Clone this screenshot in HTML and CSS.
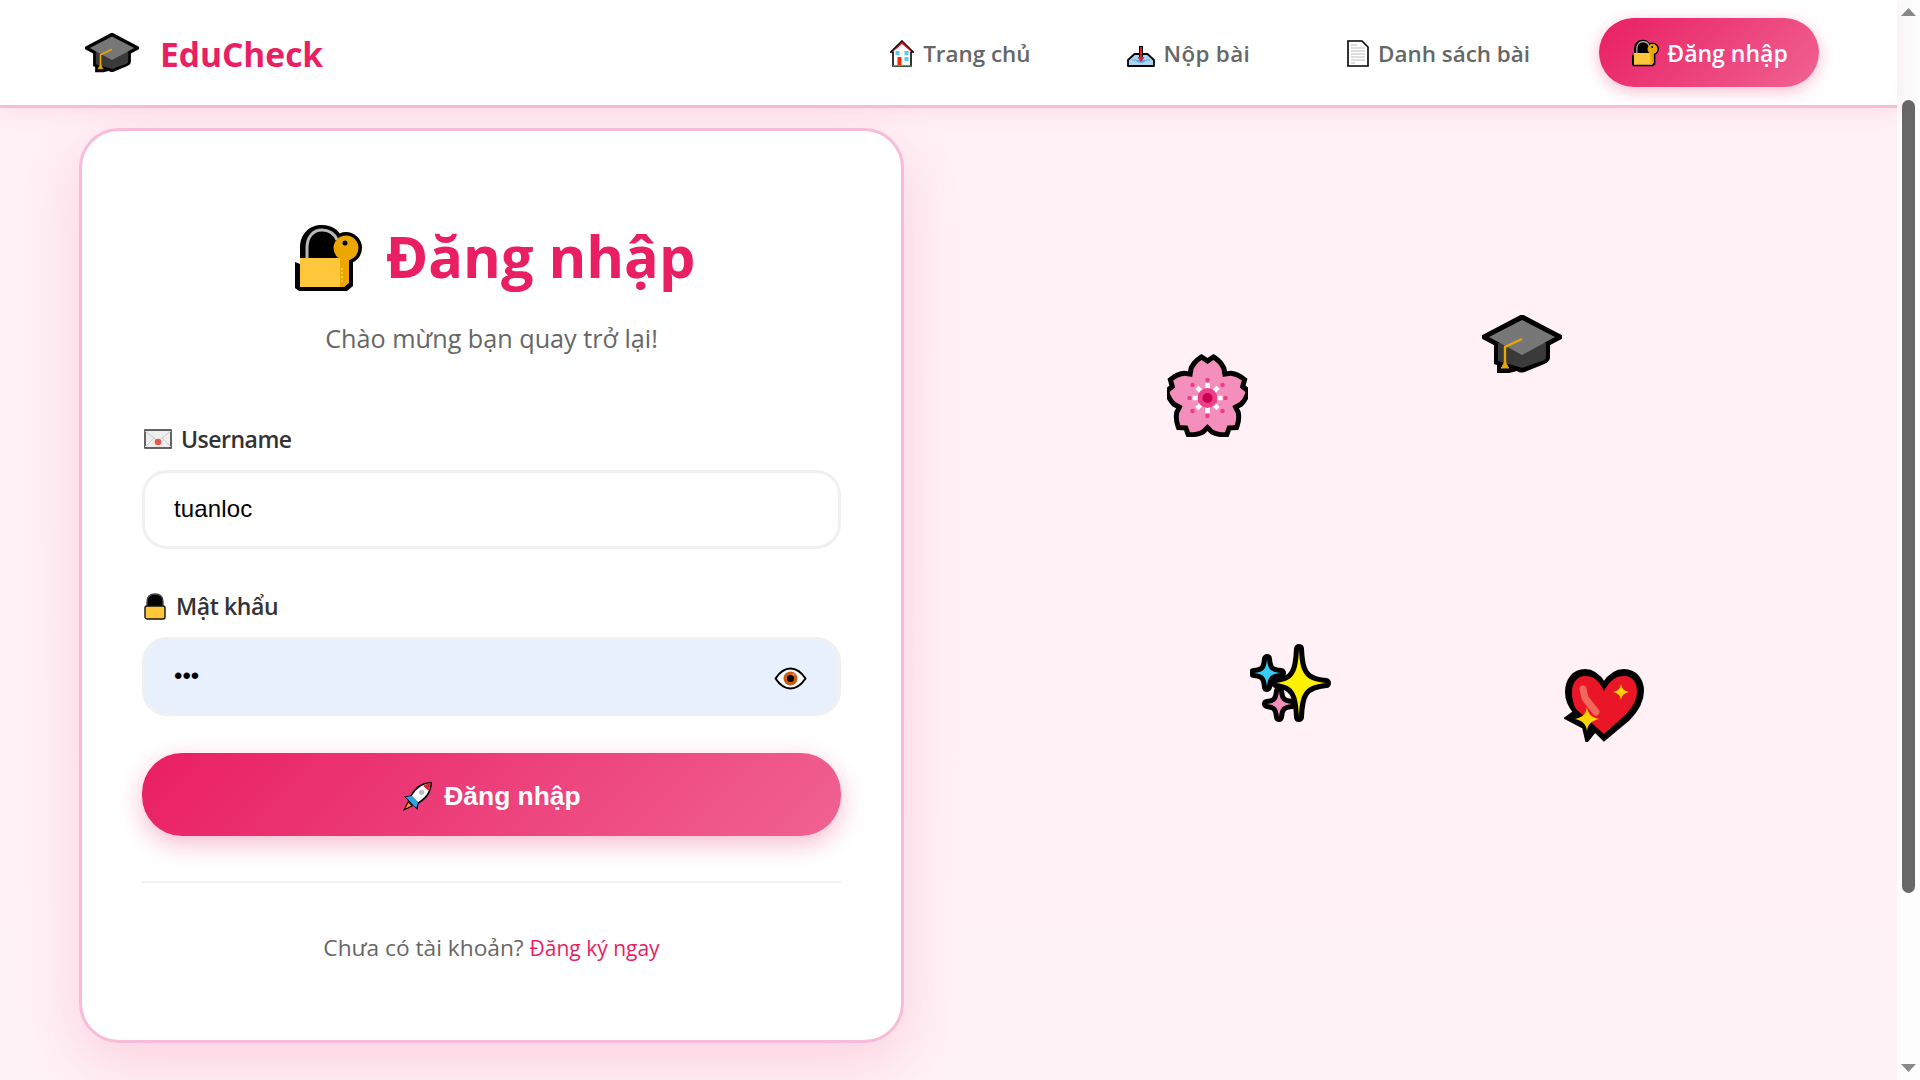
FILE: index.html
```html
<!DOCTYPE html>
<html lang="vi">
<head>
<meta charset="utf-8">
<title>EduCheck</title>
<link rel="stylesheet" href="styles.css">
</head>
<body>
<svg class="defs" aria-hidden="true">
  <symbol id="cap" viewBox="0 0 80 62">
    <path d="M12 27V49L15 50V58H27L35 56C38 58 42 58 45 56L60 50C65 48 68 46 68 42V27Z" fill="#000"/>
    <path d="M40 2 78 22 40 42 2 22Z" fill="#000" stroke="#000" stroke-width="5" stroke-linejoin="round"/>
    <path d="M16 28V46L37 52C39 53 41 53 43 52L60 46C63 45 64 44 64 41V28Z" fill="#3a3a3a"/>
    <path d="M40 5 73 22 40 40 7 22Z" fill="#777"/>
    <path d="M40 24 23 32V48" fill="none" stroke="#eba600" stroke-width="2.4"/>
    <path d="M23 46 26 52 27 53H19L20 52Z" fill="#eba600" stroke="#eba600"/>
  </symbol>
  <symbol id="lockkey" viewBox="0 0 67 68">
    <path d="M5 40V24C5 9 15 1 27 1 37 1 44 6 47 14V38H58V62L52 67H4L0 64V38Z" fill="#000"/>
    <circle cx="51" cy="24" r="16" fill="#000"/>
    <path d="M12 34V24C12 13 18 6 27 6 34 6 40 10 42 16" fill="none" stroke="#b9b9b9" stroke-width="3"/>
    <path d="M5 34H53V59L49 63H5Z" fill="#fec63b"/>
    <path d="M45 34H54V59L49 63H45Z" fill="#eba600"/>
    <path d="M47 44V60" stroke="#fec63b" stroke-width="2" stroke-dasharray="2 2"/>
    <circle cx="51" cy="24" r="12.500" fill="#eba600"/>
    <circle cx="50" cy="19" r="2.500" fill="#000"/>
  </symbol>
</svg>

<div class="viewport">
  <div class="page">
    <header class="topbar">
      <a class="brand">
        <svg class="brand-icon"><use href="#cap"/></svg>
        <span class="brand-name">EduCheck</span>
      </a>
      <nav class="nav">
        <a class="nav-link">
          <svg class="nav-icon" viewBox="0 0 24 27">
            <path d="M12 1 23 12H21V26H3V12H1Z" fill="#fff" stroke="#000" stroke-width="1.600"/>
            <path d="M12 2 21.500 11.500 12 3.500 2.500 11.500Z" fill="#e11" stroke="#d01" />
            <rect x="5.500" y="11" width="4" height="4" fill="#4ccdf7"/>
            <rect x="14.500" y="11" width="4" height="4" fill="#4ccdf7"/>
            <rect x="14.500" y="17" width="4" height="4" fill="#4ccdf7"/>
            <rect x="7.500" y="17" width="4" height="8" fill="#f52a0c"/>
            <path d="M3 25.600H21" stroke="#1ecb2a" stroke-width="1.200"/>
          </svg>
          Trang chủ
        </a>
        <a class="nav-link">
          <svg class="nav-icon nav-icon-wide" viewBox="0 0 28 27">
            <path d="M7.500 14H20.500L27 20V26H1V20Z" fill="#a9d4f2" stroke="#000" stroke-width="1.800" stroke-linejoin="round"/>
            <path d="M5 20H9C10 23 18 23 19 20H23" fill="#5aa7dc" stroke="#5aa7dc" stroke-width="1"/>
            <path d="M14 6V17" stroke="#000" stroke-width="4"/>
            <path d="M14 7V19" stroke="#e11d2a" stroke-width="2"/>
            <path d="M10.500 17H17.500L14 22Z" fill="#e11d2a"/>
          </svg>
          Nộp bài
        </a>
        <a class="nav-link">
          <svg class="nav-icon nav-icon-doc" viewBox="0 0 22 27">
            <path d="M1 1H15L21 7V26H1Z" fill="#fff" stroke="#000" stroke-width="1.600"/>
            <path d="M4 5H10M4 8H18M4 11H18M4 14H18M4 17H18M4 20H18M4 23H8" stroke="#bdbdbd" stroke-width="1"/>
          </svg>
          Danh sách bài
        </a>
        <a class="nav-cta">
          <svg class="cta-icon"><use href="#lockkey"/></svg>
          Đăng nhập
        </a>
      </nav>
    </header>

    <main class="content">
      <section class="card">
        <h1 class="title">
          <svg class="title-icon"><use href="#lockkey"/></svg>
          <span class="title-text">Đăng nhập</span>
        </h1>
        <p class="subtitle">Chào mừng bạn quay trở lại!</p>

        <form class="form">
          <label class="label label-user">
            <svg class="label-mail" viewBox="0 0 28 20">
              <rect x="1" y="1" width="26" height="18" fill="#eee" stroke="#333" stroke-width="1.500"/>
              <path d="M1 2 14 12 27 2M1 18 10 9M27 18 18 9" fill="none" stroke="#ccc" stroke-width="1"/>
              <circle cx="14" cy="13" r="3.300" fill="#ea5a4c"/>
            </svg>
            Username
          </label>
          <input class="field field-text" type="text" value="tuanloc">

          <label class="label label-pass">
            <svg class="label-lock" viewBox="0 0 22 27">
              <path d="M3 15V9C3 4 6 1 11 1S19 4 19 9V15Z" fill="#000" stroke="#444" stroke-width="1.400"/>
              <path d="M1 15C1 14 2 13 3 13H19C20 13 21 14 21 15V24C21 25 20 26 19 26H3C2 26 1 25 1 24Z" fill="#fec63b" stroke="#111" stroke-width="1.400"/>
            </svg>
            Mật khẩu
          </label>
          <div class="field-wrap">
            <input class="field field-filled" type="password" value="abc">
            <svg class="eye" viewBox="0 0 32 23">
              <path d="M1 11.500C6 4 11 1.500 16 1.500S26 4 31 11.500C26 19 21 21.500 16 21.500S6 19 1 11.500Z" fill="#fff" stroke="#000" stroke-width="2" stroke-linejoin="round"/>
              <circle cx="16" cy="11.500" r="7" fill="#cf5b12"/>
              <circle cx="16" cy="11.500" r="3.500" fill="#000"/>
              <circle cx="19" cy="7.500" r="1" fill="#f3b58d"/>
            </svg>
          </div>

          <button class="submit" type="button">
            <svg class="rocket" viewBox="0 0 30 30">
              <path d="M29 1C20 1 13 5 8 14L2 15 5 18 12 25 15 28 16 22C25 17 29 10 29 1Z" fill="#000"/>
              <path d="M27.500 2.500C20 3 14 7 9.500 14.500L15.500 20.500C23 16 27 10 27.500 2.500Z" fill="#fff"/>
              <path d="M27.500 2.500C25 2.600 22.500 3.400 20.500 4.500L25.500 9.500C26.700 7.500 27.400 5 27.500 2.500Z" fill="#e11d2a"/>
              <path d="M9.500 14.500 3.500 15.500 6 18 11.500 24 14 26 15.500 20.500Z" fill="#2aa6e6"/>
              <circle cx="19" cy="11" r="2.600" fill="#bdbdbd"/>
              <path d="M6 20 2 28 10 24Z" fill="#f79a1e" stroke="#000" stroke-width="1"/>
            </svg>
            Đăng nhập
          </button>
        </form>

        <hr class="rule">
        <p class="foot">Chưa có tài khoản? <a class="foot-link">Đăng ký ngay</a></p>
      </section>

      <aside class="deco">
        <svg class="emoji emoji-flower" viewBox="0 0 81 84">
          <defs>
            <path id="petal" d="M0 0-16-17-14-29C-12-33-9-36-6-38L0-34 6-38C9-36 12-33 14-29L16-17Z"/>
          </defs>
          <g transform="translate(40.500 45)">
            <g fill="#000" stroke="#000" stroke-width="10" stroke-linejoin="miter">
              <use href="#petal"/>
              <use href="#petal" transform="rotate(72)"/>
              <use href="#petal" transform="rotate(144)"/>
              <use href="#petal" transform="rotate(216)"/>
              <use href="#petal" transform="rotate(288)"/>
            </g>
            <g fill="#f48fbb">
              <use href="#petal"/>
              <use href="#petal" transform="rotate(72)"/>
              <use href="#petal" transform="rotate(144)"/>
              <use href="#petal" transform="rotate(216)"/>
              <use href="#petal" transform="rotate(288)"/>
            </g>
            <path d="M0-15V15M-15 0H15M-10.600-10.600 10.600 10.600M-10.600 10.600 10.600-10.600" stroke="#fff" stroke-width="4.500"/>
            <g fill="#ee3d8b">
              <circle cy="-18" r="2.300"/><circle cy="18" r="2.300"/><circle cx="-18" r="2.300"/><circle cx="18" r="2.300"/>
              <circle cx="-15" cy="-13" r="2.300"/><circle cx="15" cy="-13" r="2.300"/><circle cx="-15" cy="13" r="2.300"/><circle cx="15" cy="13" r="2.300"/>
              <circle r="10"/>
            </g>
            <circle r="5" fill="#c9004f"/>
          </g>
        </svg>

        <svg class="emoji emoji-cap"><use href="#cap"/></svg>

        <svg class="emoji emoji-sparkles" viewBox="0 0 81 78">
          <defs>
            <path id="bigstar" d="M49 5C50 27 53 37 76 39 53 41 50 51 49 73 48 51 45 41 26 39 45 37 48 27 49 5Z"/>
            <path id="bluestar" d="M17 15C18 25 20 28 31 29 20 30 18 33 17 43 16 33 14 30 4 29 14 28 16 25 17 15Z"/>
            <path id="pinkstar" d="M29 47C30 56 32 59 42 60 32 61 30 64 29 73 28 64 26 61 17 60 26 59 28 56 29 47Z"/>
          </defs>
          <g stroke="#000" stroke-width="10" stroke-linejoin="round" fill="#000">
            <use href="#bluestar"/><use href="#pinkstar"/><use href="#bigstar"/>
          </g>
          <use href="#bluestar" fill="#35ccf5"/>
          <use href="#pinkstar" fill="#f48fbb"/>
          <use href="#bigstar" fill="#fff200"/>
        </svg>

        <svg class="emoji emoji-heart" viewBox="0 0 81 73">
          <path d="M40 15C46 6 52 2 60 2 71 2 78 11 78 22 78 32 73 41 64 50L40 70 31 61 23 71 20 58 3 49 11 43C5 36 3 30 3 23 3 11 10 2 21 2 29 2 35 7 40 15Z" fill="#000" stroke="#000" stroke-width="4" stroke-linejoin="miter"/>
          <path d="M40 22C46 11 52 7 60 7 69 7 73 14 73 22 73 31 69 38 60 47L40 65 12 40C9 35 8 29 8 23 8 14 13 7 21 7 29 7 35 11 40 22Z" fill="#ea1527"/>
          <path d="M19 20 21 29 32 43" fill="none" stroke="#f06a5a" stroke-width="7" stroke-linecap="round" stroke-linejoin="round"/>
          <path d="M57 15C58 20 60 22 65 23 60 24 58 26 57 31 56 26 54 24 49 23 54 22 56 20 57 15Z" fill="#ffd500"/>
          <path d="M23 38C24 45 27 48 35 50 27 52 24 55 23 62 22 55 19 52 11 50 19 48 22 45 23 38Z" fill="#ffd500"/>
        </svg>
      </aside>
    </main>
  </div>

  <div class="scrollbar">
    <svg class="arrow" viewBox="0 0 15 8"><path d="M7.500 0 15 8H0Z"/></svg>
    <div class="thumb-gap"></div>
    <div class="thumb"></div>
    <div class="track-rest"></div>
    <svg class="arrow" viewBox="0 0 15 8"><path d="M0 0H15L7.500 8Z"/></svg>
  </div>
</div>
</body>
</html>
```

FILE: styles.css
```css
* { box-sizing: border-box; }
html, body { margin: 0; height: 100%; overflow: hidden; }
body { font-family: "Open Sans", "Noto Sans", sans-serif; color: #333; }
.defs { display: none; }

.viewport { display: flex; height: 1080px; }
.page {
  flex: 1;
  min-width: 0;
  display: flex;
  flex-direction: column;
  background: linear-gradient(180deg, #fff1f6 0%, #fff2f7 100%);
}

/* header */
.topbar {
  height: 108px;
  flex: none;
  display: flex;
  align-items: center;
  justify-content: space-between;
  padding: 0 78px 0 85px;
  background: #fff;
  border-bottom: 3px solid #f8bbd9;
  box-shadow: 0 4px 20px rgba(233, 30, 99, 0.1);
  position: relative;
}
.brand { display: flex; align-items: center; gap: 21px; padding-top: 2px; }
.brand-icon { width: 54px; height: 42px; }
.brand-name { font-size: 33.5px; font-weight: 700; color: #e91e63; }
.nav { display: flex; align-items: center; }
.nav-link {
  display: flex;
  align-items: center;
  gap: 9px;
  margin-right: 96px;
  font-size: 22.4px;
  font-weight: 600;
  color: #666;
  padding-top: 1px;
}
.nav-link:nth-child(2) { margin-right: 97px; letter-spacing: 0.35px; }
.nav-link:nth-child(3) { margin-right: 69px; }
.nav-icon { width: 24px; height: 27px; }
.nav-icon-wide { width: 28px; height: 27px; }
.nav-icon-doc { width: 22px; height: 27px; }
.nav-cta {
  width: 220px;
  height: 69px;
  padding-left: 2px;
  display: flex;
  align-items: center;
  justify-content: center;
  gap: 8px;
  border-radius: 35px;
  background: linear-gradient(135deg, #e91e63, #f06292);
  box-shadow: 0 4px 15px rgba(233, 30, 99, 0.3);
  color: #fff;
  font-size: 23px;
  font-weight: 600;
}
.cta-icon { width: 27px; height: 28px; }

/* main */
.content { flex: 1; display: flex; padding: 20px 0 0 79px; min-height: 0; }
.card {
  width: 825px;
  height: 915px;
  flex: none;
  padding: 89px 60px 0;
  background: #fff;
  border: 3px solid #f8bbd9;
  border-radius: 40px;
  box-shadow: 0 20px 60px rgba(233, 30, 99, 0.16);
  position: relative;
}
.title {
  margin: 0;
  height: 76px;
  padding-left: 7px;
  display: flex;
  align-items: center;
  justify-content: center;
  gap: 24px;
  font-size: 57.6px;
  line-height: 76px;
  font-weight: 700;
  color: #e91e63;
}
.title-icon { width: 67px; height: 68px; }
.title-text { padding-bottom: 4px; }
.subtitle {
  margin: 26px 0 70px;
  text-align: center;
  font-size: 25.2px;
  line-height: 32px;
  color: #666;
}
.form { display: flex; flex-direction: column; }
.label {
  height: 30px;
  display: flex;
  align-items: center;
  font-size: 23px;
  font-weight: 600;
  color: #333;
  letter-spacing: -0.4px;
}
.label-user { gap: 9px; margin: 0 0 16px 2px; letter-spacing: -0.5px; }
.label-pass { gap: 10px; margin: 42px 0 16px 2px; }
.label-mail { width: 28px; height: 20px; }
.label-lock { width: 22px; height: 27px; }
.field {
  width: 100%;
  height: 79px;
  padding: 0 29px 2px;
  border: 3px solid #f0f0f0;
  border-radius: 25px;
  background: #fff;
  font-family: "Liberation Sans", Arial, sans-serif;
  font-size: 24px;
  color: #000;
  outline: none;
  display: block;
}
.field-text { letter-spacing: 0.15px; }
.field-filled { background: #e8f0fe; }
.field-wrap { position: relative; }
.eye { position: absolute; right: 34px; top: 30px; width: 33px; height: 23px; }
.submit {
  margin-top: 37px;
  height: 83px;
  padding-top: 4px;
  display: flex;
  align-items: center;
  justify-content: center;
  gap: 11px;
  border: 0;
  border-radius: 40px;
  background: linear-gradient(135deg, #e91e63, #f06292);
  box-shadow: 0 8px 25px rgba(233, 30, 99, 0.3);
  color: #fff;
  font-family: "Liberation Sans", Arial, sans-serif;
  font-size: 26.4px;
  font-weight: 700;
}
.rocket { width: 31px; height: 31px; }
.rule { margin: 45px 0 0; border: 0; border-top: 2px solid #f5f0f2; }
.foot { margin: 49px 0 0; text-align: center; font-size: 22.7px; line-height: 32px; color: #666; }
.foot-link { color: #e91e63; font-size: 21px; }

/* decoration */
.deco { flex: 1; position: relative; }
.emoji { position: absolute; }
.emoji-flower { left: 263px; top: 225px; width: 81px; height: 84px; }
.emoji-cap { left: 578px; top: 187px; width: 80px; height: 62px; }
.emoji-sparkles { left: 346px; top: 516px; width: 81px; height: 78px; }
.emoji-heart { left: 660px; top: 541px; width: 81px; height: 73px; }

/* scrollbar */
.scrollbar {
  flex: none;
  width: 23px;
  height: 1080px;
  display: flex;
  flex-direction: column;
  align-items: center;
  padding: 8px 0;
  background: #fdfdfd;
}
.arrow { width: 15px; height: 8px; fill: #8a8a8a; flex: none; }
.thumb-gap { height: 84px; flex: none; }
.thumb { width: 13px; height: 793px; flex: none; border-radius: 7px; background: #686868; }
.track-rest { flex: 1; }
```
